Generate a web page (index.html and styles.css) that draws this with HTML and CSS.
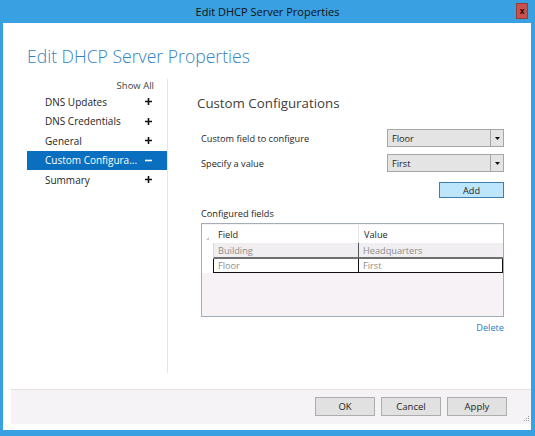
FILE: index.html
```html
<!DOCTYPE html>
<html>
<head>
<meta charset="utf-8">
<link rel="stylesheet" href="styles.css">
</head>
<body>
<div class="window">
  <div class="titlebar">
    <span></span>
    <span class="title">Edit DHCP Server Properties</span>
    <span class="close">x</span>
  </div>
  <div class="client">
    <h1 class="page-title">Edit DHCP Server Properties</h1>
    <div class="main">
      <nav class="nav">
        <div class="show-all">Show All</div>
        <div class="nav-item"><span>DNS Updates</span><svg class="sign" width="7" height="7" viewBox="0 0 7 7"><path d="M0 3.5H7M3.5 0V7" stroke="#111" stroke-width="1.6"/></svg></div>
        <div class="nav-item"><span>DNS Credentials</span><svg class="sign" width="7" height="7" viewBox="0 0 7 7"><path d="M0 3.5H7M3.5 0V7" stroke="#111" stroke-width="1.6"/></svg></div>
        <div class="nav-item"><span>General</span><svg class="sign" width="7" height="7" viewBox="0 0 7 7"><path d="M0 3.5H7M3.5 0V7" stroke="#111" stroke-width="1.6"/></svg></div>
        <div class="nav-item active"><span>Custom Configura...</span><svg class="sign" width="7" height="7" viewBox="0 0 7 7"><path d="M0 3.5H7" stroke="#fff" stroke-width="1.6"/></svg></div>
        <div class="nav-item"><span>Summary</span><svg class="sign" width="7" height="7" viewBox="0 0 7 7"><path d="M0 3.5H7M3.5 0V7" stroke="#111" stroke-width="1.6"/></svg></div>
      </nav>
      <section class="pane">
        <h2 class="pane-title">Custom Configurations</h2>
        <div class="form-row first">
          <span class="label">Custom field to configure</span>
          <div class="combo"><span class="combo-text">Floor</span><span class="combo-arrow"><svg width="5" height="3" viewBox="0 0 5 3"><path d="M0 0H5L2.5 3Z" fill="#111"/></svg></span></div>
        </div>
        <div class="form-row">
          <span class="label">Specify a value</span>
          <div class="combo"><span class="combo-text">First</span><span class="combo-arrow"><svg width="5" height="3" viewBox="0 0 5 3"><path d="M0 0H5L2.5 3Z" fill="#111"/></svg></span></div>
        </div>
        <div class="add-row"><button class="btn add">Add</button></div>
        <div class="section-label">Configured fields</div>
        <div class="grid">
          <div class="grid-row header">
            <div class="rowhead"><svg class="corner" width="3" height="3" viewBox="0 0 3 3"><path d="M3 0V3H0Z" fill="#c8c8c8"/></svg></div>
            <div class="cell">Field</div>
            <div class="cell sep">Value</div>
          </div>
          <div class="grid-row data">
            <div class="rowhead"></div>
            <div class="cell">Building</div>
            <div class="cell sep">Headquarters</div>
          </div>
          <div class="grid-row data current">
            <div class="rowhead"></div>
            <div class="cell">Floor</div>
            <div class="cell sep">First</div>
          </div>
        </div>
        <div class="delete-row"><span class="link">Delete</span></div>
      </section>
    </div>
    <div class="footer">
      <button class="btn">OK</button>
      <button class="btn">Cancel</button>
      <button class="btn">Apply</button>
    </div>
    <svg class="grip" width="7" height="7" viewBox="0 0 7 7">
      <rect x="5" y="0" width="1" height="1" fill="#9a9a9a"/>
      <rect x="3" y="2" width="1" height="1" fill="#9a9a9a"/>
      <rect x="5" y="2" width="1" height="1" fill="#9a9a9a"/>
      <rect x="1" y="4" width="1" height="1" fill="#9a9a9a"/>
      <rect x="3" y="4" width="1" height="1" fill="#9a9a9a"/>
      <rect x="5" y="4" width="1" height="1" fill="#9a9a9a"/>
    </svg>
  </div>
</div>
</body>
</html>
```

FILE: styles.css
```css
* { box-sizing: border-box; }
html, body { margin: 0; padding: 0; }
body {
  background: #39a0e2;
  font-family: "Open Sans", "Noto Sans", sans-serif;
  font-size: 9.2px;
  color: #1e1e1e;
  width: 535px;
  height: 436px;
  overflow: hidden;
}
.window {
  height: 436px;
  display: flex;
  flex-direction: column;
}
.titlebar {
  height: 23px;
  display: grid;
  grid-template-columns: 1fr auto 1fr;
  align-items: start;
}
.title {
  font-size: 11px;
  line-height: 23px;
  color: #111;
}
.close {
  justify-self: end;
  margin-top: 3px;
  margin-right: 7px;
  width: 12px;
  height: 16px;
  background: #c9514d;
  border: 1px solid #9b3b38;
  color: #111;
  font-size: 8px;
  font-weight: bold;
  line-height: 13px;
  text-align: center;
}
.client {
  position: relative;
  flex: 1;
  margin: 0 4px 6px 3px;
  background: #fff;
  display: flex;
  flex-direction: column;
}
.page-title {
  margin: 0;
  height: 56px;
  padding: 21px 0 0 24px;
  font-size: 17.6px;
  line-height: 24px;
  font-weight: 300;
  color: #3383c0;
}
.main {
  height: 294px;
  display: flex;
}
.nav {
  width: 140px;
  margin-left: 24px;
  font-size: 10px;
}
.show-all {
  height: 13px;
  line-height: 13px;
  text-align: right;
  padding-right: 13px;
  font-size: 9.5px;
  color: #444;
}
.nav-item {
  height: 19.5px;
  display: flex;
  align-items: center;
  justify-content: space-between;
  padding: 0 15px 0 18px;
  color: #1e1e1e;
}
.nav-item.active {
  background: #0a6fbe;
  color: #fff;
}
.sign { display: block; }
.pane {
  flex: 1;
  border-left: 1px solid #e4e4e4;
  padding: 16px 27px 0 33px;
}
.pane-title {
  margin: 0 0 0 -4px;
  font-size: 13.3px;
  line-height: 16px;
  font-weight: 400;
  color: #404040;
}
.form-row {
  display: flex;
  align-items: center;
  justify-content: space-between;
  height: 18px;
  margin-top: 7px;
}
.form-row.first { margin-top: 18px; }
.combo {
  width: 117px;
  height: 18px;
  border: 1px solid #a6a6a6;
  background: #e4e4e4;
  display: flex;
  align-items: center;
}
.combo-text {
  flex: 1;
  padding-left: 4px;
}
.combo-arrow {
  width: 13px;
  height: 100%;
  border-left: 1px solid #a6a6a6;
  display: flex;
  align-items: center;
  justify-content: center;
}
.combo-arrow svg { display: block; }
.add-row {
  display: flex;
  justify-content: flex-end;
  margin-top: 10px;
}
.btn {
  font-family: inherit;
  font-size: 9.5px;
  color: #1e1e1e;
  width: 60px;
  height: 19px;
  padding: 0;
  background: #e1e1e1;
  border: 1px solid #adadad;
  border-radius: 0;
}
.btn.add {
  width: 65px;
  height: 16px;
  font-size: 9.2px;
  background: #bde5fc;
  border-color: #3c7fb1;
}
.section-label {
  margin-top: 9px;
  line-height: 14px;
}
.grid {
  margin-top: 2px;
  height: 94px;
  border: 1px solid #a3adb8;
  background: #f6f2f5;
  padding-top: 1px;
}
.grid-row {
  display: grid;
  grid-template-columns: 11px 145px 1fr;
}
.grid-row.header {
  height: 18px;
  background: #fff;
  color: #1e1e1e;
}
.rowhead {
  position: relative;
  background: #fff;
}
.corner {
  position: absolute;
  left: 4px;
  bottom: 3px;
}
.cell {
  padding-left: 4px;
  display: flex;
  align-items: center;
  white-space: nowrap;
}
.header .cell { padding-left: 5px; }
.header .cell.sep { border-left: 1px solid #e6e6e6; }
.grid-row.data { color: #8d8d8d; }
.grid-row.data .cell {
  background: #f0eef0;
}
.grid-row.data:not(.current) {
  height: 16px;
}
.grid-row.data:not(.current) .cell {
  border-bottom: 2px solid #6f6f6f;
  border-left: 1px solid #d8d8d8;
}
.grid-row.data:not(.current) .cell.sep { border-left-color: #555; }
.grid-row.current { height: 14px; }
.grid-row.current .cell {
  background: #fff;
  border-bottom: 1px solid #111;
  border-left: 1px solid #111;
}
.grid-row.current .cell.sep { border-right: 1px solid #111; }
.delete-row {
  margin-top: 4px;
  line-height: 14px;
  text-align: right;
}
.link { color: #2a7bbd; }
.footer {
  margin: 16px 0 0 8px;
  height: 35px;
  background: #f6f3f6;
  border-top: 1px solid #e4e0e4;
  display: flex;
  justify-content: flex-end;
  align-items: flex-start;
  gap: 6px;
  padding: 7px 24px 0 0;
}
.grip {
  position: absolute;
  right: 1px;
  bottom: 7px;
}
```
